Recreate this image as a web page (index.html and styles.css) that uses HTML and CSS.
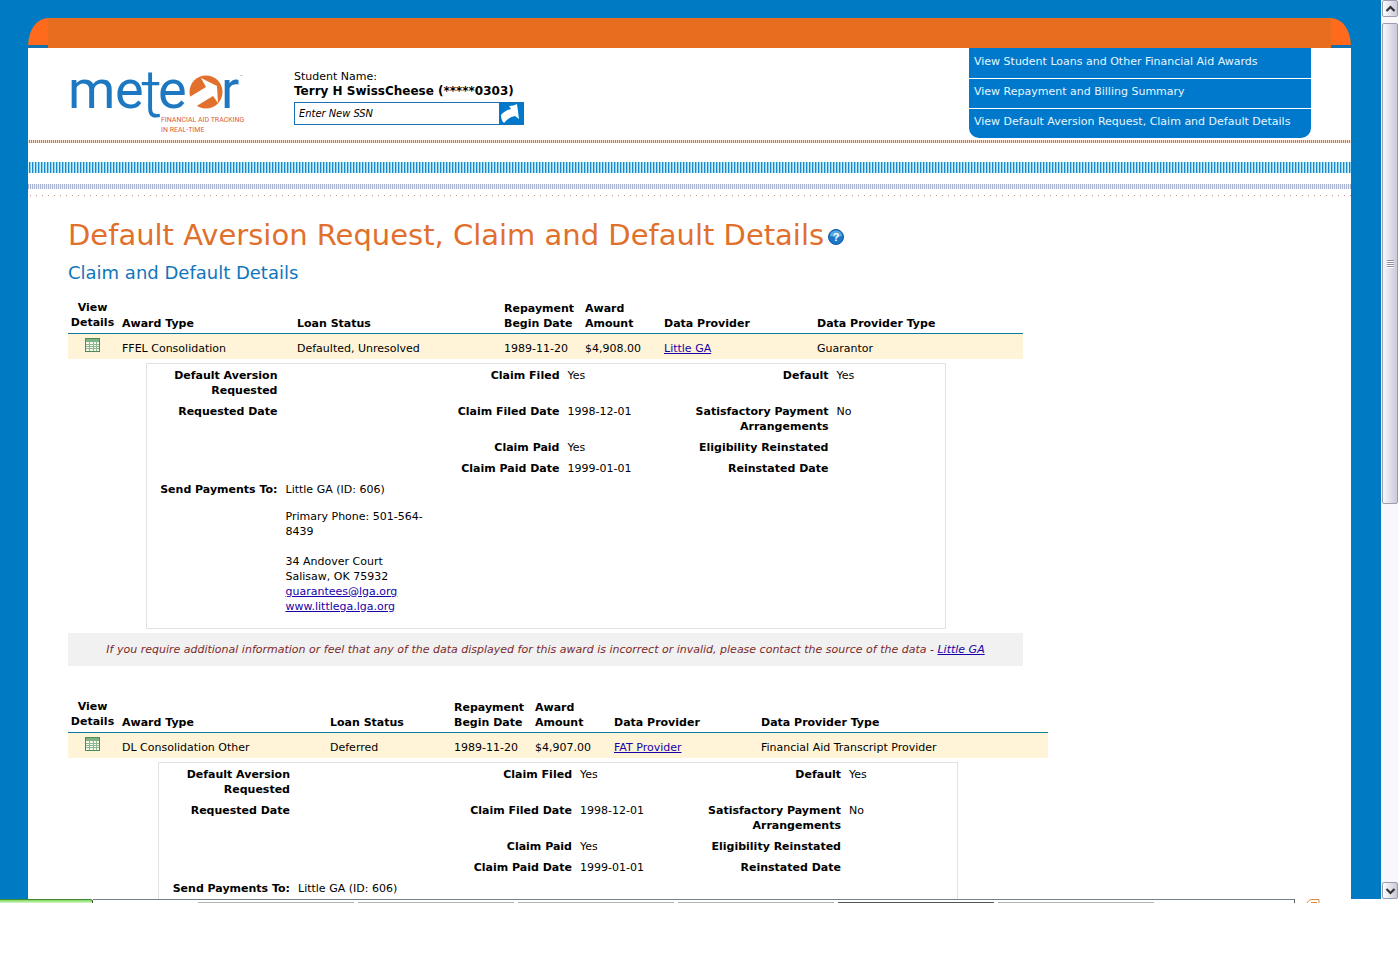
FILE: index.html
```html
<!DOCTYPE html>
<html lang="en">
<head>
<meta charset="utf-8">
<title>Meteor - Default Aversion Request, Claim and Default Details</title>
<link rel="stylesheet" href="styles.css">
</head>
<body>
<div class="window">
  <div class="viewport">
    <div class="page">
      <div class="topbar">
        <svg class="corner" width="20" height="30" viewBox="0 0 20 30"><rect width="20" height="30" fill="#007ac2"/><path d="M0 27C1 11 8 1 20 0V27Z" fill="#ff6a1c"/><rect y="27" width="20" height="3" fill="#1471ad"/></svg>
        <div class="topfill"></div>
        <svg class="corner" width="20" height="30" viewBox="0 0 20 30"><rect width="20" height="30" fill="#007ac2"/><path d="M20 27C19 11 12 1 0 0V27Z" fill="#ff6a1c"/><rect y="27" width="20" height="3" fill="#1471ad"/></svg>
      </div>
      <header class="header">
        <svg class="logo" width="180" height="72" viewBox="0 0 180 72" role="img" aria-label="Meteor">
          <g class="wordmark">
            <text x="-2" y="44">m</text>
            <text x="45" y="44">e</text>
            <text class="tall" x="71" y="53">t</text>
            <text x="88" y="44">e</text>
            <text x="151" y="44">r</text>
          </g>
          <circle cx="136" cy="28" r="16.500" fill="#e0702c"/>
          <path d="M118 34L136 23L131 14L147 22L148 39L143 32L125 43Z" fill="#fff"/>
          <text class="tm" x="170" y="14">™</text>
          <text class="tagline" x="91" y="58">FINANCIAL AID TRACKING</text>
          <text class="tagline" x="91" y="68">IN REAL-TIME</text>
        </svg>
        <form class="student">
          <label for="ssn">Student Name:<strong>Terry H SwissCheese (*****0303)</strong></label>
          <div class="ssn">
            <input id="ssn" type="text" value="Enter New SSN">
            <button type="button" aria-label="Go"><svg width="24" height="21" viewBox="0 0 24 21"><path d="M2 12Q5 8 12 6L10 3Q15 3 18 1L20 16L16 13Q10 14 5 20Q2 17 2 12Z" fill="#fff"/></svg></button>
          </div>
        </form>
        <nav class="menu">
          <a href="#">View Student Loans and Other Financial Aid Awards</a>
          <a href="#">View Repayment and Billing Summary</a>
          <a href="#">View Default Aversion Request, Claim and Default Details</a>
        </nav>
      </header>
      <div class="stripe-orange"></div>
      <div class="stripe-blue"></div>
      <div class="stripe-gray"></div>
      <div class="stripe-dots"></div>
      <main class="content">
        <h1>Default Aversion Request, Claim and Default Details <button class="help" type="button" aria-label="Help"><svg width="16" height="16" viewBox="0 0 16 16"><circle cx="8" cy="8" r="7.5" fill="#1a78ca" stroke="#1258a0"/><path d="M2 7a6 5.500 0 0 1 12 0Q8 9 2 7Z" fill="#58a8e2"/><text x="8" y="12" text-anchor="middle">?</text></svg></button></h1>
        <h2>Claim and Default Details</h2>

        <section class="award award-ffel">
          <table class="summary">
            <colgroup><col class="view"><col class="type"><col class="status"><col class="begin"><col class="amount"><col class="provider"><col></colgroup>
            <thead><tr><th>View Details</th><th>Award Type</th><th>Loan Status</th><th>Repayment<br>Begin Date</th><th>Award<br>Amount</th><th>Data Provider</th><th>Data Provider Type</th></tr></thead>
            <tbody><tr><td><a href="#" aria-label="View details"><svg width="15" height="14" viewBox="0 0 15 14"><rect x=".5" y=".5" width="14" height="13" fill="#f3f9ed" stroke="#4d8a55"/><path d="M1 1H14V4H1Z" fill="#7fb184"/><path d="M1 6.500H14M1 8.500H14M1 10.500H14M4.500 4V13M8.500 4V13M11.500 4V13" stroke="#8fb78f"/></svg></a></td><td>FFEL Consolidation</td><td>Defaulted, Unresolved</td><td>1989-11-20</td><td>$4,908.00</td><td><a href="#">Little GA</a></td><td>Guarantor</td></tr></tbody>
          </table>
          <table class="details">
            <colgroup><col class="d1"><col class="d2"><col class="d3"><col class="d4"><col class="d5"><col></colgroup>
            <tbody>
              <tr><th>Default Aversion Requested</th><td></td><th>Claim Filed</th><td>Yes</td><th>Default</th><td>Yes</td></tr>
              <tr><th>Requested Date</th><td></td><th>Claim Filed Date</th><td>1998-12-01</td><th>Satisfactory Payment Arrangements</th><td>No</td></tr>
              <tr><th></th><td></td><th>Claim Paid</th><td>Yes</td><th>Eligibility Reinstated</th><td></td></tr>
              <tr><th></th><td></td><th>Claim Paid Date</th><td>1999-01-01</td><th>Reinstated Date</th><td></td></tr>
              <tr><th>Send Payments To:</th><td>Little GA (ID: 606)<p>Primary Phone: 501-564-8439<br><br>34 Andover Court<br>Salisaw, OK 75932<br><a href="#">guarantees@lga.org</a><br><a href="#">www.littlega.lga.org</a></p></td><th></th><td></td><th></th><td></td></tr>
            </tbody>
          </table>
          <p class="notice">If you require additional information or feel that any of the data displayed for this award is incorrect or invalid, please contact the source of the data - <a href="#">Little GA</a></p>
        </section>

        <section class="award award-dl">
          <table class="summary">
            <colgroup><col class="view"><col class="type"><col class="status"><col class="begin"><col class="amount"><col class="provider"><col></colgroup>
            <thead><tr><th>View Details</th><th>Award Type</th><th>Loan Status</th><th>Repayment<br>Begin Date</th><th>Award<br>Amount</th><th>Data Provider</th><th>Data Provider Type</th></tr></thead>
            <tbody><tr><td><a href="#" aria-label="View details"><svg width="15" height="14" viewBox="0 0 15 14"><rect x=".5" y=".5" width="14" height="13" fill="#f3f9ed" stroke="#4d8a55"/><path d="M1 1H14V4H1Z" fill="#7fb184"/><path d="M1 6.500H14M1 8.500H14M1 10.500H14M4.500 4V13M8.500 4V13M11.500 4V13" stroke="#8fb78f"/></svg></a></td><td>DL Consolidation Other</td><td>Deferred</td><td>1989-11-20</td><td>$4,907.00</td><td><a href="#">FAT Provider</a></td><td>Financial Aid Transcript Provider</td></tr></tbody>
          </table>
          <table class="details">
            <colgroup><col class="d1"><col class="d2"><col class="d3"><col class="d4"><col class="d5"><col></colgroup>
            <tbody>
              <tr><th>Default Aversion Requested</th><td></td><th>Claim Filed</th><td>Yes</td><th>Default</th><td>Yes</td></tr>
              <tr><th>Requested Date</th><td></td><th>Claim Filed Date</th><td>1998-12-01</td><th>Satisfactory Payment Arrangements</th><td>No</td></tr>
              <tr><th></th><td></td><th>Claim Paid</th><td>Yes</td><th>Eligibility Reinstated</th><td></td></tr>
              <tr><th></th><td></td><th>Claim Paid Date</th><td>1999-01-01</td><th>Reinstated Date</th><td></td></tr>
              <tr><th>Send Payments To:</th><td>Little GA (ID: 606)<p></p></td><th></th><td></td><th></th><td></td></tr>
            </tbody>
          </table>
        </section>
      </main>
    </div>
  </div>
  <div class="scrollbar">
    <button type="button" aria-label="Scroll up"><svg width="15" height="16" viewBox="0 0 15 16"><path d="M3.500 10L7.500 6L11.500 10" fill="none" stroke="#333" stroke-width="2.200"/></svg></button>
    <div class="track"><div class="thumb"></div></div>
    <button type="button" aria-label="Scroll down"><svg width="15" height="16" viewBox="0 0 15 16"><path d="M3.500 6L7.500 10L11.500 6" fill="none" stroke="#333" stroke-width="2.200"/></svg></button>
  </div>
</div>
<div class="taskbar">
  <span class="start"></span>
  <span class="tasks"><i></i><i></i><i></i><i></i><i class="active"></i><i></i></span>
  <svg class="tray" width="14" height="4" viewBox="0 0 14 4"><path d="M1 4Q2 1.500 5 .500H13V4M5 3.500H11" fill="none" stroke="#e28a3c"/></svg>
</div>
</body>
</html>
```

FILE: styles.css
```css
* { box-sizing: border-box; }
body {
  margin: 0;
  height: 100vh;
  padding-bottom: 61px;
  display: flex;
  flex-direction: column;
  background: #fff;
  color: #000;
  font: 11px/15px Verdana, "DejaVu Sans", sans-serif;
}
a { color: #1a00a8; }
button { padding: 0; border: 0; background: none; }
svg { display: block; }

.window { flex: 1; min-height: 0; display: flex; padding-right: 2px; }
.viewport { flex: 1; min-width: 0; overflow: hidden; background: #007ac2; padding: 18px 30px 0 28px; }
.page { min-height: 100%; background: #fff; }
.topbar { display: flex; height: 30px; }
.topfill { flex: 1; background: #e86d1f; }

.header { display: flex; height: 92px; padding: 0 40px 0 42px; }
.logo { margin-top: 16px; overflow: visible; }
.wordmark { font: 54px Roboto, sans-serif; fill: #1d78c1; }
.wordmark .tall { font-size: 66px; font-weight: 300; }
.tagline { font: 7px Roboto, sans-serif; fill: #dc6038; }
.tm { font: 4px Roboto, sans-serif; fill: #1d78c1; }
.student { width: 230px; margin: 21px auto 0 44px; white-space: nowrap; }
.student strong { display: block; font-size: 12px; }
.ssn { display: flex; height: 23px; margin-top: 3px; border: 1px solid #1a70b4; }
.ssn input { flex: 1; min-width: 0; border: 0; padding: 0 4px; font: italic 11px "DejaVu Sans Condensed", "DejaVu Sans", sans-serif; color: #000; }
.ssn button { background: #0079cc; width: 24px; }
.menu { width: 342px; height: 90px; background: #0079cc; border-radius: 0 0 10px 10px; white-space: nowrap; }
.menu a { display: block; height: 30px; padding: 6px 5px; color: #e6f6ff; text-decoration: none; }
.menu a + a { padding-top: 5px; border-top: 1px solid #fff; }

.stripe-orange { height: 3px; background: linear-gradient(90deg, #fbe3d3 50%, #e4702e 50%) 0 0 / 2px 3px; }
.stripe-blue { height: 11px; margin-top: 19px; background: linear-gradient(90deg, #c5f4fc 33%, #1f86c8 33% 66%, #8fcdee 66%) 0 0 / 3px 11px; }
.stripe-gray { height: 5px; margin-top: 11px; background: linear-gradient(90deg, #a7b3cf 50%, #eef1f7 50%) 0 0 / 2px 5px; }
.stripe-dots { height: 1px; margin-top: 6px; background: linear-gradient(90deg, #cf8f80 1px, #fff 1px) 2px 0 / 6px 1px; }

.content { padding: 20px 40px; }
h1 { display: flex; align-items: center; gap: 4px; margin: 0; font-size: 29px; line-height: 38px; font-weight: 400; color: #e0702c; white-space: nowrap; }
h2 { margin: 7px 0 12px; font-size: 18px; line-height: 24px; font-weight: 400; color: #0f76bb; }
.help { padding-top: 4px; }
.help text { font: bold 11px "Liberation Sans", sans-serif; fill: #fff; }

.award { margin-bottom: 31px; }
.award-ffel { width: 955px; }
.award-dl { width: 980px; }
table { border-collapse: collapse; table-layout: fixed; }
.summary { width: 100%; }
.summary th { padding: 2px 0 2px 5px; text-align: left; vertical-align: bottom; }
.summary th:first-child { padding: 0 0 3px; text-align: center; }
.summary thead tr { height: 36px; border-bottom: 1px solid #0f7b9c; }
.summary td { padding: 7px 0 3px 5px; }
.summary td:first-child { padding: 4px 0 7px 17px; }
.summary tbody tr { background: #fff4d8; }
.view { width: 49px; }
.type { width: 175px; }
.status { width: 207px; }
.begin { width: 81px; }
.amount { width: 79px; }
.provider { width: 153px; }
.award-dl .type { width: 208px; }
.award-dl .status { width: 124px; }
.award-dl .provider { width: 147px; }

.details { width: 800px; margin: 4px auto; padding-top: 1px; border: 1px solid #e2e2e2; border-collapse: separate; border-spacing: 0; }
.details th, .details td { height: 21px; padding: 3px 4px; vertical-align: top; }
.details th { text-align: right; }
.details p { margin: 12px 0 11px; }
.d1 { width: 135px; }
.d2 { width: 157px; }
.d3 { width: 125px; }
.d4 { width: 121px; }
.d5 { width: 148px; }
.notice { margin: 0; padding: 9px 0; background: #f1f1f1; color: #7c2a2a; font-style: italic; text-align: center; white-space: nowrap; }

.scrollbar { width: 17px; display: flex; flex-direction: column; background: #f8f8fc; padding: 0 0 0 1px; }
.scrollbar button { height: 17px; border: 1px solid #9c9cae; border-radius: 2px; background: linear-gradient(90deg, #fff, #c9c9da); }
.track { flex: 1; padding-top: 6px; }
.thumb { height: 56%; border: 1px solid #9c9cae; border-radius: 2px; background: repeating-linear-gradient(#8f8fa2 0 1px, #fff 1px 2px) center / 7px 8px no-repeat, linear-gradient(90deg, #f8f8fb, #c9c9da); }

.taskbar { height: 4px; display: flex; }
.start { width: 93px; border-top: 1px solid #3f8a35; border-right: 1px solid #244d24; border-radius: 0 3px 0 0; background: linear-gradient(#7ed858, #d9f6ce); }
.tasks { width: 1202px; display: flex; gap: 4px; padding: 2px 0 0 105px; border-top: 1px solid #75808a; border-right: 1px solid #55606a; }
.tasks i { flex: none; width: 156px; height: 1px; background: #b4b4b4; }
.tasks .active { background: #555; }
.tray { margin-left: 11px; }
```
